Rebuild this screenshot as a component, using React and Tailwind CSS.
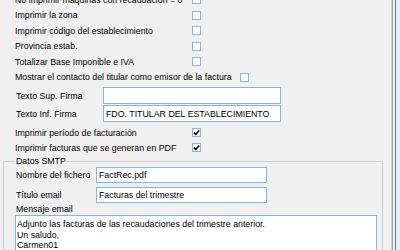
const topRows = [
  "No imprimir máquinas con recaudación = 0",
  "Imprimir la zona",
  "Imprimir código del establecimiento",
  "Provincia estab.",
  "Totalizar Base Imponible e IVA",
];

const Check = ({ checked }) => (
  <span className="flex h-[9px] w-[9px] shrink-0 items-center justify-center border border-[#86b6e6] bg-white">
    {checked && (
      <svg width="7" height="7" viewBox="0 0 7 7">
        <path d="M0.8 3.6 2.7 5.4 6.2 1.4" fill="none" stroke="#000" strokeWidth="1.5" />
      </svg>
    )}
  </span>
);

const CheckRow = ({ label, checked, h = "h-[15.5px]" }) => (
  <div className={`flex ${h} items-center pl-[12px]`}>
    <span className="w-[177px] whitespace-nowrap">{label}</span>
    <Check checked={checked} />
  </div>
);

const Field = ({ label, value, labelW, inputW, h, pl }) => (
  <div className="flex items-center">
    <span className={`${labelW} whitespace-nowrap pl-[1px]`}>{label}</span>
    <div className={`${inputW} ${h} flex items-center border border-[#82b4e6] bg-white ${pl} whitespace-nowrap`}>
      {value}
    </div>
  </div>
);

export default function App() {
  return (
    <div
      className="flex h-[250px] w-[400px] overflow-hidden bg-[#f0f0f0] text-[8.8px] leading-[10px] text-black"
      style={{ fontFamily: '"Liberation Sans", Arial, sans-serif' }}
    >
      <div className="flex w-[391px] shrink-0 flex-col pl-[3px]">
        <div className="-mt-[8px]">
          {topRows.map((r) => (
            <CheckRow key={r} label={r} />
          ))}
          <div className="flex h-[15.5px] items-center gap-[8px] pl-[12px]">
            <span className="whitespace-nowrap">Mostrar el contacto del titular como emisor de la factura</span>
            <Check />
          </div>
        </div>

        <div className="mt-[2px] flex flex-col gap-[1px] pl-[12px]">
          <Field label="Texto Sup. Firma" value="" labelW="w-[88px]" inputW="w-[178px]" h="h-[17px]" pl="pl-[1px]" />
          <Field
            label="Texto Inf. Firma"
            value="FDO. TITULAR DEL ESTABLECIMIENTO"
            labelW="w-[88px]"
            inputW="w-[178px]"
            h="h-[17px]"
            pl="pl-[2px]"
          />
        </div>

        <div className="mt-[3px]">
          <CheckRow label="Imprimir período de facturación" checked h="h-[15px]" />
          <CheckRow label="Imprimir facturas que se generan en PDF" checked h="h-[15px]" />
        </div>

        <fieldset className="mt-[1px] w-[380px] border border-[#cfcfcf] pr-[5px] pl-[11px] pt-[1px]">
          <legend className="px-[1px] leading-[10px]">Datos SMTP</legend>
          <div className="flex flex-col gap-[4px]">
            <Field label="Nombre del fichero" value="FactRec.pdf" labelW="w-[81px]" inputW="w-[171px]" h="h-[16px]" pl="pl-[2px]" />
            <Field label="Título email" value="Facturas del trimestre" labelW="w-[81px]" inputW="w-[171px]" h="h-[16px]" pl="pl-[2px]" />
          </div>
          <div className="flex h-[12px] items-center pl-[1px]">Mensaje email</div>
          <div className="h-[60px] w-[362px] border border-[#82b4e6] bg-white pl-[1px] pt-[3px] leading-[10.6px]">
            <div>Adjunto las facturas de las recaudaciones del trimestre anterior.</div>
            <div>Un saludo,</div>
            <div>Carmen01</div>
          </div>
        </fieldset>
      </div>
      <div className="w-[1px] bg-[#d4d4d4]" />
      <div className="w-[1px] bg-[#a6a6a6]" />
      <div className="w-[2px] bg-[#f0f0f0]" />
      <div className="w-[1px] bg-[#3c8de0]" />
      <div className="flex-1 bg-[#e4effa]" />
    </div>
  );
}
